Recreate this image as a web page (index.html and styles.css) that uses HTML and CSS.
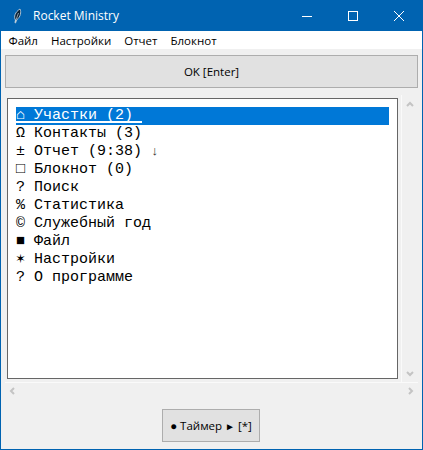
FILE: index.html
```html
<!DOCTYPE html>
<html lang="ru">
<head>
<meta charset="utf-8">
<title>Rocket Ministry</title>
<link rel="stylesheet" href="styles.css">
</head>
<body>
<div class="window">
  <header class="titlebar">
    <svg class="app-icon" width="16" height="16" viewBox="0 0 16 16"><path d="M6 15 L6.5 12 C4.5 9 6 4 11 1 C12.5 4 11.5 9 8 11.5 L6.5 15 Z" fill="#0b2236" stroke="#cfdde8" stroke-width=".8"/><path d="M6.2 14 L9.5 5" stroke="#e8f0f5" stroke-width=".6" fill="none"/></svg>
    <span class="title">Rocket Ministry</span>
    <div class="controls">
      <span class="ctl"><svg width="10" height="10" viewBox="0 0 10 10"><path d="M0 5.5H10" stroke="#fff" fill="none"/></svg></span>
      <span class="ctl"><svg width="10" height="10" viewBox="0 0 10 10"><rect x=".5" y=".5" width="9" height="9" stroke="#fff" fill="none"/></svg></span>
      <span class="ctl"><svg width="10" height="10" viewBox="0 0 10 10"><path d="M0 0L10 10M10 0L0 10" stroke="#fff" fill="none"/></svg></span>
    </div>
  </header>
  <nav class="menubar">
    <span>Файл</span><span>Настройки</span><span>Отчет</span><span>Блокнот</span>
  </nav>
  <main class="content">
    <button class="btn btn-ok">OK [Enter]</button>
    <div class="list-area">
      <div class="listbox">
        <div class="row selected">⌂ Участки (2)</div>
        <div class="row">Ω Контакты (3)</div>
        <div class="row">± Отчет (9:38) <span class="arrow">↓</span></div>
        <div class="row">□ Блокнот (0)</div>
        <div class="row">? Поиск</div>
        <div class="row">% Статистика</div>
        <div class="row">© Служебный год</div>
        <div class="row">■ Файл</div>
        <div class="row">✶ Настройки</div>
        <div class="row">? О программе</div>
      </div>
      <div class="vscroll">
        <svg width="8" height="6" viewBox="0 0 8 6"><path d="M1 5L4 2L7 5" stroke="#c4c4c4" stroke-width="2" fill="none"/></svg>
        <svg width="8" height="6" viewBox="0 0 8 6"><path d="M1 1L4 4L7 1" stroke="#c4c4c4" stroke-width="2" fill="none"/></svg>
      </div>
    </div>
    <div class="hscroll">
      <svg width="6" height="8" viewBox="0 0 6 8"><path d="M5 1L2 4L5 7" stroke="#c4c4c4" stroke-width="2" fill="none"/></svg>
      <svg width="6" height="8" viewBox="0 0 6 8"><path d="M1 1L4 4L1 7" stroke="#c4c4c4" stroke-width="2" fill="none"/></svg>
    </div>
    <div class="footer">
      <button class="btn btn-timer">● Таймер <span class="play">►</span> [*]</button>
    </div>
  </main>
</div>
</body>
</html>
```
FILE: styles.css
```css
* { box-sizing: border-box; }
html, body { margin: 0; padding: 0; }
body { width: 423px; height: 450px; overflow: hidden; background: #f0f0f0; }
.window {
  width: 423px; height: 450px; display: flex; flex-direction: column;
  border: 1px solid #0063b1; border-top: 0; background: #f0f0f0;
  font-family: "Open Sans", "Noto Sans", sans-serif; color: #000;
}
.titlebar {
  height: 31px; flex: none; background: #0063b1; color: #fff;
  display: flex; align-items: center; padding-left: 9px; margin: 0 -1px;
}
.app-icon { flex: none; }
.title { margin-left: 8px; font-size: 12px; }
.controls { margin-left: auto; display: flex; height: 100%; padding-right: 1px; }
.ctl { width: 46px; display: flex; align-items: center; justify-content: center; }
.menubar {
  height: 18px; flex: none; background: #fff; display: flex; align-items: center;
  font-size: 11.5px; padding-left: 1px;
}
.menubar span { padding: 0 6.5px; }
.content { flex: 1; display: flex; flex-direction: column; padding: 6px 4px 0 4px; }
.btn {
  background: #e1e1e1; border: 1px solid #adadad; font: inherit; font-size: 11.5px;
  color: #000; padding: 0; height: 33px;
}
.btn-ok { width: 413px; flex: none; }
.list-area { display: flex; margin-top: 7px; height: 287px; flex: none; }
.listbox {
  margin: 3px 0 0 2px; width: 392px; height: 281px; background: #fff;
  border: 1px solid #666;
  padding: 8px 8px 0 8px;
  font-family: "Liberation Mono", monospace; font-size: 15px;
}
.row { height: 18px; line-height: 18px; white-space: pre; }
.arrow { font-size: 13px; color: #333; }
.selected { background: #0078d7; color: #fff; position: relative; }
.selected::after {
  content: ""; position: absolute; left: 0; top: 14px; width: 126px; height: 2px; background: #fff;
}
.vscroll {
  width: 17px; margin-left: 3px; display: flex; flex-direction: column;
  justify-content: space-between; align-items: center; padding: 6px 0 5px;
  border-left: 1px solid #fafafa;
}
.hscroll {
  height: 17px; display: flex; justify-content: space-between; align-items: center;
  padding: 0 4px; border-top: 1px solid #fafafa;
}
.footer { display: flex; padding-left: 157px; margin-top: 10px; }
.btn-timer { width: 98px; }
.play { font-size: 10px; }
```
